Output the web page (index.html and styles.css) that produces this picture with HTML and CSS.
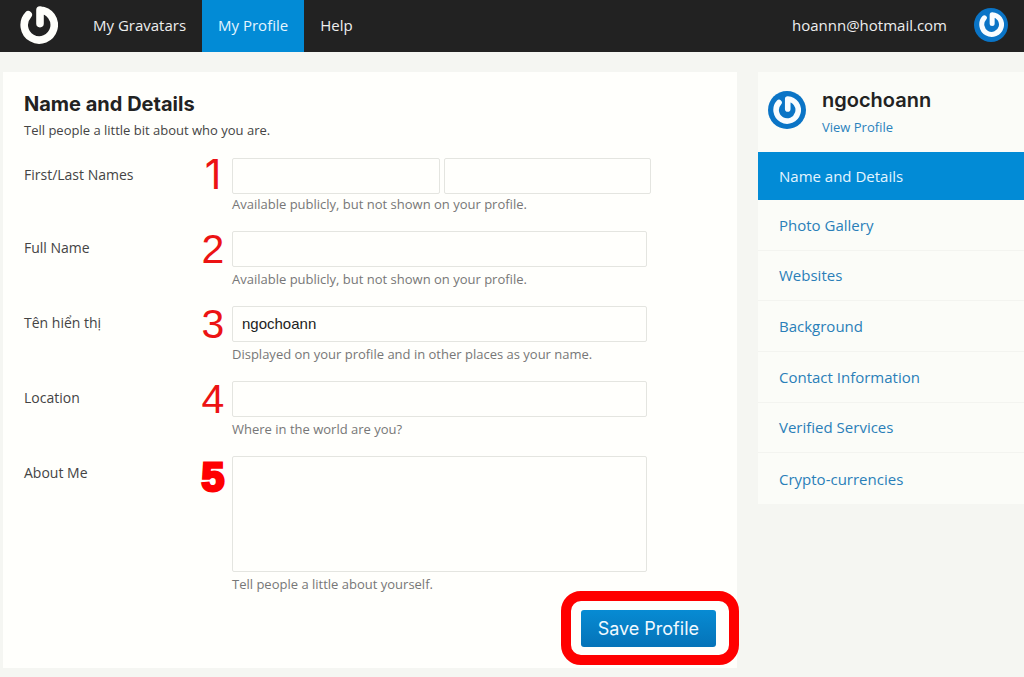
FILE: index.html
```html
<!DOCTYPE html>
<html lang="en">
<head>
<meta charset="utf-8">
<title>My Profile</title>
<link rel="stylesheet" href="styles.css">
</head>
<body>
<svg class="defs" aria-hidden="true">
  <symbol id="mark" viewBox="0 0 38 38">
    <path d="M20 4v13.6M20 4A15 15 0 1 1 8.2 8.8" fill="none" stroke="currentColor" stroke-width="7.6" stroke-linecap="round" stroke-linejoin="round"/>
  </symbol>
</svg>
<header class="topbar">
  <a class="logo" href="#" aria-label="Home"><svg class="logo-mark"><use href="#mark"/></svg></a>
  <nav class="nav">
    <a class="nav-link" href="#">My Gravatars</a>
    <a class="nav-link active" href="#">My Profile</a>
    <a class="nav-link" href="#">Help</a>
  </nav>
  <a class="account" href="#">hoannn@hotmail.com
    <span class="avatar"><svg class="avatar-mark"><use href="#mark"/></svg></span>
  </a>
</header>
<div class="page">
  <main class="panel">
    <h1 class="title">Name and Details</h1>
    <p class="intro">Tell people a little bit about who you are.</p>
    <form class="form">
      <div class="row names">
        <label class="label" for="first">First/Last Names</label>
        <span class="step plain">1</span>
        <div class="field">
          <div class="pair">
            <input class="input" id="first" type="text">
            <input class="input" id="last" type="text" aria-label="Last name">
          </div>
          <p class="hint">Available publicly, but not shown on your profile.</p>
        </div>
      </div>
      <div class="row">
        <label class="label" for="full">Full Name</label>
        <span class="step">2</span>
        <div class="field">
          <input class="input" id="full" type="text">
          <p class="hint">Available publicly, but not shown on your profile.</p>
        </div>
      </div>
      <div class="row">
        <label class="label" for="display">Tên hiển thị</label>
        <span class="step">3</span>
        <div class="field">
          <input class="input" id="display" type="text" value="ngochoann">
          <p class="hint">Displayed on your profile and in other places as your name.</p>
        </div>
      </div>
      <div class="row">
        <label class="label" for="location">Location</label>
        <span class="step">4</span>
        <div class="field">
          <input class="input" id="location" type="text">
          <p class="hint">Where in the world are you?</p>
        </div>
      </div>
      <div class="row about">
        <label class="label" for="about">About Me</label>
        <span class="step heavy">5</span>
        <div class="field">
          <textarea class="input area" id="about"></textarea>
          <p class="hint">Tell people a little about yourself.</p>
        </div>
      </div>
      <div class="actions">
        <div class="save-wrap"><button class="save" type="submit">Save Profile</button></div>
      </div>
    </form>
  </main>
  <aside class="sidebar">
    <div class="user">
      <span class="avatar large"><svg class="avatar-mark"><use href="#mark"/></svg></span>
      <div class="user-text">
        <h2 class="user-name">ngochoann</h2>
        <a class="view" href="#">View Profile</a>
      </div>
    </div>
    <nav class="menu">
      <a class="menu-link current" href="#">Name and Details</a>
      <a class="menu-link" href="#">Photo Gallery</a>
      <a class="menu-link" href="#">Websites</a>
      <a class="menu-link" href="#">Background</a>
      <a class="menu-link" href="#">Contact Information</a>
      <a class="menu-link" href="#">Verified Services</a>
      <a class="menu-link" href="#">Crypto-currencies</a>
    </nav>
  </aside>
</div>
</body>
</html>
```
FILE: styles.css
```css
* { box-sizing: border-box; }
body {
  margin: 0;
  background: #f5f6f2;
  color: #444;
  font: 13px/18px "Open Sans", "Noto Sans", sans-serif;
}
a { text-decoration: none; }
h1, h2, p { margin: 0; }
.defs { position: absolute; width: 0; height: 0; }

.topbar {
  display: flex;
  align-items: center;
  height: 52px;
  padding: 0 16px 0 20px;
  background: #222;
  font-size: 15px;
}
.logo { display: flex; padding-bottom: 3px; color: #fffffb; }
.logo-mark { width: 38px; height: 38px; }
.nav { display: flex; align-self: stretch; margin-left: 19px; }
.nav-link {
  display: flex;
  align-items: center;
  padding: 0 16px 3px;
  color: #eee;
}
.nav-link.active { background: #028bd6; color: #e4f5ff; }
.account {
  display: flex;
  align-items: center;
  gap: 27px;
  margin-left: auto;
  padding-bottom: 3px;
  color: #eee;
}
.avatar {
  display: flex;
  align-items: center;
  justify-content: center;
  flex: none;
  width: 34px;
  height: 34px;
  border-radius: 50%;
  background: #0a74c6;
  color: #f8fcff;
}
.avatar-mark { width: 25px; height: 25px; }
.avatar.large { width: 38px; height: 38px; }
.large .avatar-mark { width: 28px; height: 28px; }

.page {
  display: flex;
  align-items: flex-start;
  gap: 21px;
  padding: 20px 0 9px 3px;
}
.panel {
  flex: 1;
  min-width: 0;
  padding: 21px 21px 21px;
  background: #fffffc;
}
.title {
  color: #222;
  font: 700 20px/22px Inter, "Open Sans", sans-serif;
}
.intro { margin-top: 6px; }
.form { margin-top: 19px; }
.row { display: flex; min-height: 75px; }
.row.names { min-height: 73px; }
.row.about { min-height: 136px; }
.label { width: 177px; padding-top: 8px; font-size: 14px; }
.step {
  width: 24px;
  margin-right: 7px;
  color: #ec1313;
  font: 41px/36px "Liberation Sans", Arial, sans-serif;
  text-align: center;
}
.step.plain { font-family: Inter, Arial, sans-serif; line-height: 32px; }
.step.heavy {
  color: #f00;
  font-weight: 700;
  line-height: 42px;
  -webkit-text-stroke: 3px #f00;
}
.field { flex: 0 1 415px; min-width: 0; }
.pair { display: grid; grid-template-columns: 1fr 1fr; gap: 4px; margin-right: -4px; }
.input {
  display: block;
  width: 100%;
  height: 36px;
  padding: 0 9px 2px;
  border: 1px solid #e4e5e0;
  border-radius: 2px;
  background: #fffffc;
  color: #222;
  font: 15px/20px "Liberation Sans", Arial, sans-serif;
}
.area { height: 116px; padding: 8px 9px; resize: none; }
.hint { margin-top: 3px; color: #777; }
.names .hint { margin-top: 1px; }
.actions { display: flex; justify-content: flex-end; margin-top: 17px; }
.save-wrap { position: relative; }
.save-wrap::after {
  content: "";
  position: absolute;
  inset: -19px -23px -18px -20px;
  border: 10px solid #f00;
  border-radius: 20px;
  pointer-events: none;
}
.save {
  display: block;
  height: 37px;
  padding: 0 17px;
  border: 0;
  border-radius: 3px;
  background: linear-gradient(#078bd3, #0573b8);
  color: #f0f9ff;
  font: 18px/36px Inter, "Open Sans", sans-serif;
}

.sidebar { flex: 0 0 266px; background: #fbfcf8; }
.user { display: flex; align-items: center; gap: 16px; height: 80px; padding: 0 10px 4px; }
.user-name { color: #222; font: 600 20px/22px Inter, "Open Sans", sans-serif; }
.user-text { padding-top: 5px; }
.view { display: block; margin-top: 7px; color: #2a82bd; }
.menu {
  display: grid;
  grid-template-rows: 48px repeat(6, 1fr);
  min-height: 352px;
}
.menu-link {
  display: flex;
  align-items: center;
  padding: 0 21px;
  border-bottom: 1px solid #f3f4f0;
  color: #2a7fb8;
  font-size: 15px;
}
.menu-link:last-child { border-bottom: 0; }
.menu-link.current { border: 0; background: #028bd6; color: #e4f5ff; }
```
